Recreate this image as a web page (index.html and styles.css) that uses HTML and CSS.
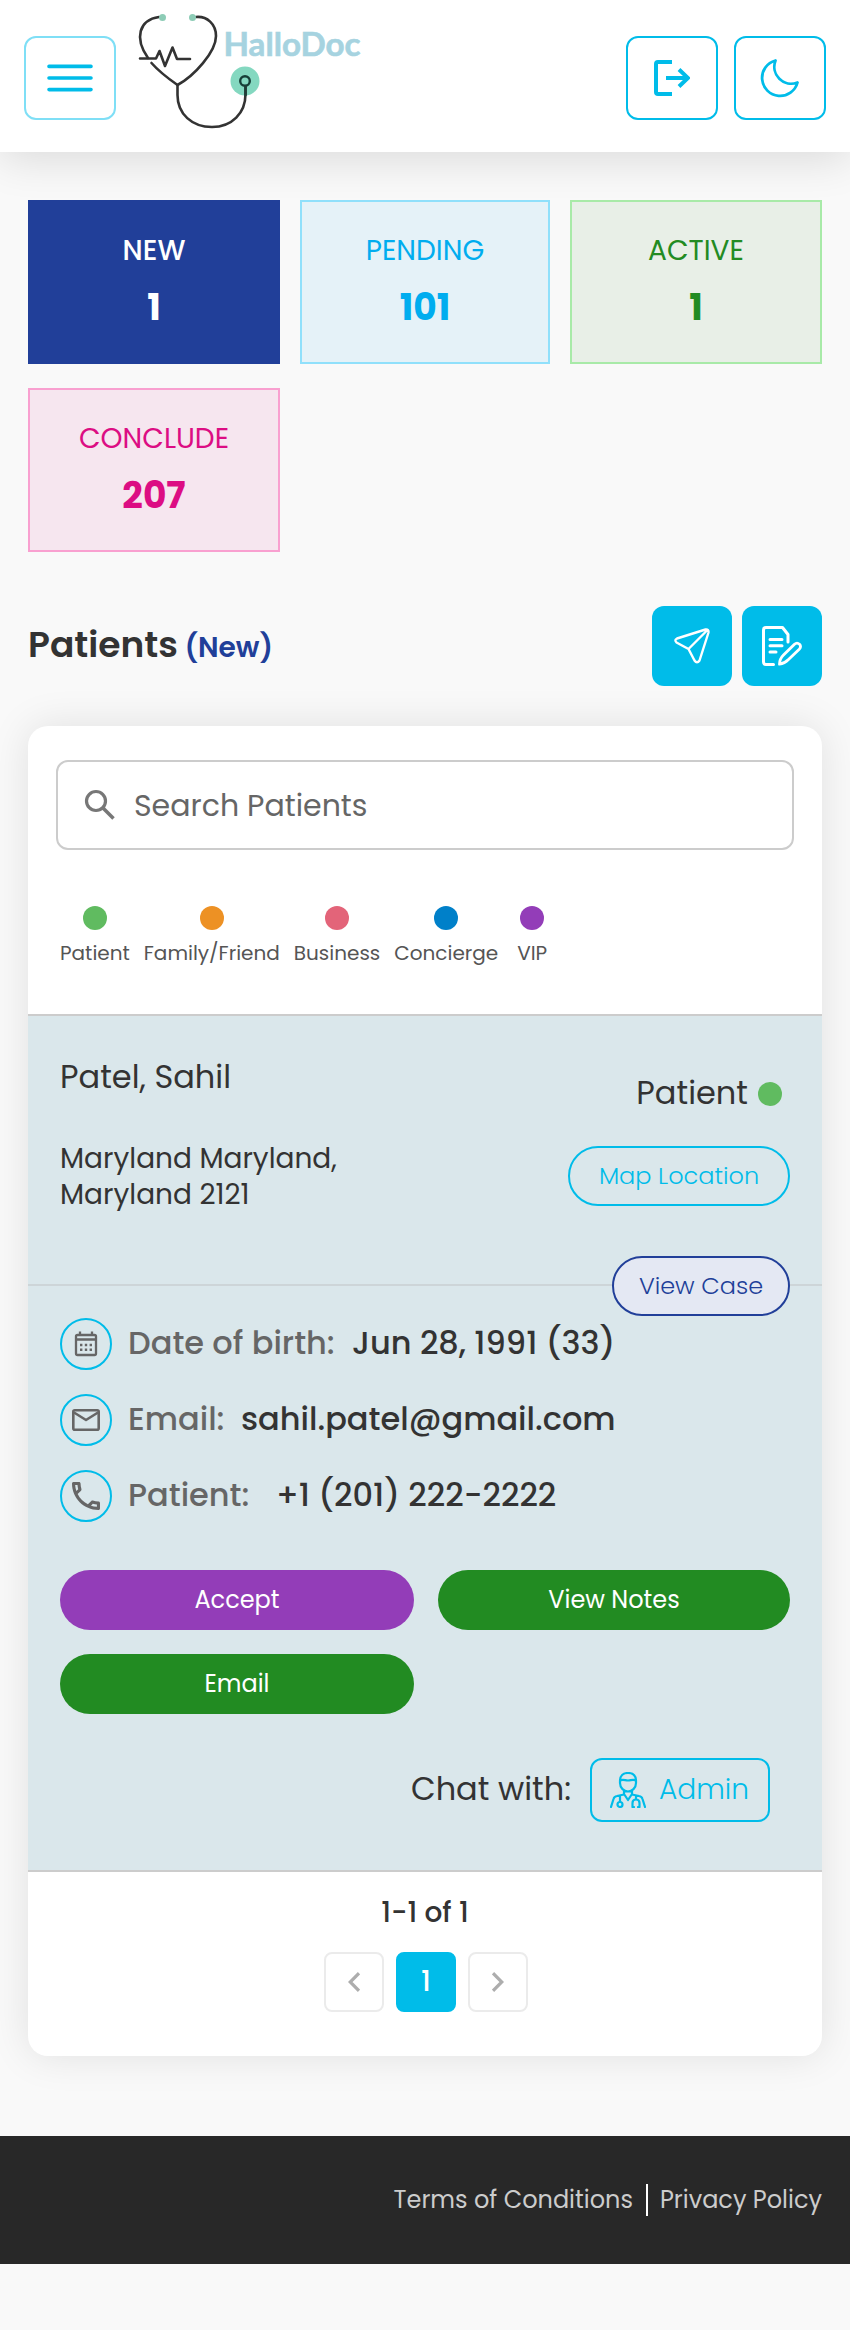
FILE: index.html
```html
<!DOCTYPE html>
<html lang="en">
<head>
<meta charset="utf-8">
<title>HalloDoc</title>
<link rel="stylesheet" href="styles.css">
</head>
<body>
<header class="topbar">
  <div class="topbar-side">
    <button class="icon-btn icon-btn-soft" aria-label="Menu">
      <svg width="46" height="28" viewBox="0 0 46 28" stroke="currentColor" stroke-width="3.6" stroke-linecap="round"><path d="M2 2.4h42M2 14h42M2 25.600h42"/></svg>
    </button>
    <svg class="logo" width="230" height="120" viewBox="0 0 230 120" fill="none">
      <circle cx="111" cy="69" r="14.500" fill="#84d8c0"/>
      <g stroke="#333" stroke-width="2.600" stroke-linecap="round" stroke-linejoin="round">
        <path d="M25 5C5 8 0 26 14 46"/>
        <path d="M17.500 51C24.500 59 33.500 66 43.500 73C60 64 82 40 82 24C82 12 73 4 62 5"/>
        <path d="M43.500 73V83C43.500 102 58 115 78 115C98 115 111.500 101 111.500 82V75"/>
        <path d="M6 46.500H22L25.500 39L31 54L38.500 35.500L43 47H56"/>
        <circle cx="111" cy="69" r="4.800" stroke="#173f38" stroke-width="2.400"/>
        <path d="M111.500 74.500V83" stroke="#1f3d37"/>
      </g>
      <circle cx="28.500" cy="5.500" r="3.500" fill="#8dccb6"/>
      <circle cx="58.500" cy="5.500" r="3.500" fill="#8dccb6"/>
      <text class="logo-text" x="89.500" y="44" textLength="137" lengthAdjust="spacingAndGlyphs">HalloDoc</text>
    </svg>
  </div>
  <div class="topbar-side topbar-actions">
    <button class="icon-btn" aria-label="Log out">
      <svg width="36" height="36" viewBox="0 0 36 36" fill="none" stroke="currentColor" stroke-width="4"><path d="M18 2H4Q2 2 2 4V32Q2 34 4 34H18M12 18H34M25 9.500L34 18L25 26.500"/></svg>
    </button>
    <button class="icon-btn" aria-label="Dark mode">
      <svg width="40" height="40" viewBox="0 0 40 40" fill="none" stroke="currentColor" stroke-width="2.800" stroke-linejoin="round"><path d="M15.500 2.500A18 18 0 1 0 37.500 24.500A17 17 0 0 1 15.500 2.500Z"/></svg>
    </button>
  </div>
</header>

<main class="content">
  <section class="stats">
    <div class="stat stat-new"><span class="stat-name">NEW</span><b class="stat-count">1</b></div>
    <div class="stat stat-pending"><span class="stat-name">PENDING</span><b class="stat-count">101</b></div>
    <div class="stat stat-active"><span class="stat-name">ACTIVE</span><b class="stat-count">1</b></div>
    <div class="stat stat-conclude"><span class="stat-name">CONCLUDE</span><b class="stat-count">207</b></div>
  </section>

  <div class="heading-row">
    <h1 class="heading">Patients <span class="heading-state">(New)</span></h1>
    <div class="heading-actions">
      <button class="solid-btn" aria-label="Send link">
        <svg width="40" height="40" viewBox="0 0 40 40" fill="none" stroke="currentColor" stroke-width="2.400" stroke-linejoin="round"><path d="M33.500 3.500L5 12.500Q2 14 4.500 16.500L16.500 23L22.500 34.500Q25 38 27.500 34.500L36.500 6.500Q37 3 33.500 3.500ZM16.500 23L35 4.500"/></svg>
      </button>
      <button class="solid-btn" aria-label="Create request">
        <svg width="40" height="40" viewBox="0 0 40 40" fill="none" stroke="currentColor" stroke-width="3" stroke-linecap="round" stroke-linejoin="round"><path d="M26 16V8.500L20.500 1.500H4Q1.500 1.500 1.500 4V36Q1.500 38.500 4 38.500H11.500M8 13.500H20M8 19.700H20M8 26H14"/><path stroke-width="2.800" d="M17.500 38.200Q17.500 33 21.500 29L32.500 18.200Q35 16 37.500 18.200Q39.500 20.500 37.500 23L26.500 33.500Q22.500 37.500 17.500 38.200Z"/></svg>
      </button>
    </div>
  </div>

  <section class="panel">
    <div class="filters">
      <label class="search">
        <svg width="32" height="32" viewBox="0 0 32 32" fill="none" stroke="#777" stroke-width="3.200"><circle cx="12" cy="12" r="9.500"/><path d="M18.500 18.500L29.500 29.500" stroke-width="3.600"/></svg>
        <span class="search-hint">Search Patients</span>
      </label>
      <ul class="legend">
        <li class="legend-item"><i class="dot dot-patient"></i><span>Patient</span></li>
        <li class="legend-item"><i class="dot dot-family"></i><span>Family/Friend</span></li>
        <li class="legend-item"><i class="dot dot-business"></i><span>Business</span></li>
        <li class="legend-item"><i class="dot dot-concierge"></i><span>Concierge</span></li>
        <li class="legend-item"><i class="dot dot-vip"></i><span>VIP</span></li>
      </ul>
    </div>

    <article class="request">
      <div class="summary">
        <div class="person">
          <div class="person-name">Patel, Sahil</div>
          <div class="person-address">Maryland Maryland,<br>Maryland 2121</div>
        </div>
        <div class="summary-side">
          <div class="kind">Patient <i class="dot dot-patient"></i></div>
          <button class="pill pill-map">Map Location</button>
        </div>
        <button class="pill pill-case">View Case</button>
      </div>
      <div class="details">
        <div class="detail">
          <span class="detail-icon"><svg width="24" height="26" viewBox="0 0 24 26" fill="none" stroke="currentColor" stroke-width="2.300"><rect x="2" y="4" width="20" height="20" rx="1.500"/><path d="M6 0.500V4M18 0.500V4M2 8.500H22" /><path d="M6 14h2.400M10.800 14h2.400M15.600 14h2.400M6 18.800h2.400M10.800 18.800h2.400M15.600 18.800h2.400" stroke-width="2.400"/></svg></span>
          <span class="detail-label lb-birth">Date of birth:</span><span class="detail-value">Jun 28, 1991 (33)</span>
        </div>
        <div class="detail">
          <span class="detail-icon"><svg width="28" height="22" viewBox="0 0 28 22" fill="none" stroke="currentColor" stroke-width="2.600" stroke-linejoin="round"><rect x="1.300" y="1.300" width="25.400" height="19.400" rx="1.500"/><path d="M2 3.500L14 11L26 3.500"/></svg></span>
          <span class="detail-label lb-email">Email:</span><span class="detail-value">sahil.patel@gmail.com</span>
        </div>
        <div class="detail">
          <span class="detail-icon"><svg width="28" height="28" viewBox="3 3 18 18" fill="currentColor"><path d="M6.540 5c.06.890.21 1.760.45 2.590l-1.200 1.200c-.410-1.200-.670-2.470-.760-3.790h1.510m9.860 12.020c.850.240 1.720.390 2.600.450v1.490c-1.320-.090-2.590-.350-3.800-.750l1.200-1.190M7.500 3H4c-.550 0-1 .450-1 1 0 9.390 7.610 17 17 17 .550 0 1-.450 1-1v-3.490c0-.550-.450-1-1-1-1.240 0-2.450-.200-3.570-.570-.100-.040-.210-.050-.310-.050-.260 0-.510.100-.710.290l-2.200 2.200c-2.830-1.450-5.150-3.760-6.590-6.590l2.200-2.200c.280-.280.360-.670.250-1.020C8.700 6.450 8.500 5.250 8.500 4c0-.550-.450-1-1-1z"/></svg></span>
          <span class="detail-label lb-phone">Patient:</span><span class="detail-value">+1 (201) 222-2222</span>
        </div>
        <div class="actions">
          <button class="action action-accept">Accept</button>
          <button class="action">View Notes</button>
          <button class="action">Email</button>
        </div>
        <div class="chat">
          <span class="chat-label">Chat with:</span>
          <button class="chat-btn">
            <svg width="36" height="36" viewBox="0 0 36 36" fill="none" stroke="currentColor" stroke-width="2.200" stroke-linecap="round" stroke-linejoin="round"><path d="M10 9C10 3.500 13 1 18 1S26 3.500 26 9V11C26 16 22 19.500 18 19.500S10 16 10 11ZM10 8.500C13 7 15 8.500 18 8.500S23 7 26 8.500M14 19V22L18 28L22 22V19M1 35L3.500 27Q4.200 24.500 7 24L14 22.500M22 22.500L29 24Q31.800 24.500 32.500 27L35 35M10 24V29.500M26 23.500V27M24 35H22.500V31Q22.500 27.500 26 27.500T29.500 31V35H28"/><circle cx="10" cy="32.500" r="2.500"/></svg>
            <span>Admin</span>
          </button>
        </div>
      </div>
    </article>

    <div class="pager">
      <div class="pager-range">1-1 of 1</div>
      <div class="pager-pages">
        <button class="page" aria-label="Previous"><svg width="12" height="20" viewBox="0 0 12 20" fill="none" stroke="currentColor" stroke-width="3.200"><path d="M11 1.200L2.200 10L11 18.800"/></svg></button>
        <button class="page page-current">1</button>
        <button class="page" aria-label="Next"><svg width="12" height="20" viewBox="0 0 12 20" fill="none" stroke="currentColor" stroke-width="3.200"><path d="M1 1.200L9.800 10L1 18.800"/></svg></button>
      </div>
    </div>
  </section>
</main>

<footer class="footer">
  <a>Terms of Conditions</a>
  <span class="footer-sep"></span>
  <a>Privacy Policy</a>
</footer>
</body>
</html>
```
FILE: styles.css
```css
* { box-sizing: border-box; }
body { margin: 0; background: #f9f9f9; color: #333; font-family: Poppins, Inter, "Open Sans", sans-serif; }
button { margin: 0; padding: 0; background: none; border: 0; font: inherit; color: inherit; }
svg { display: block; flex: none; }
span, a, div { white-space: nowrap; }

.topbar { display: flex; justify-content: space-between; align-items: flex-start; height: 152px; padding: 0 24px; background: #fff; box-shadow: 0 8px 40px rgba(0, 0, 0, .12); }
.topbar-side { display: flex; gap: 18px; }
.topbar-actions { gap: 16px; }
.icon-btn { display: flex; align-items: center; justify-content: center; width: 92px; height: 84px; margin-top: 36px; border: 2px solid #00bce9; border-radius: 12px; color: #00bce9; }
.icon-btn-soft { border-color: #7fdff6; }
.logo { margin-top: 12px; }
.logo-text { font: 700 32px Lato, sans-serif; fill: #a6d3e0; stroke: #a6d3e0; stroke-width: .6px; }

.content { padding: 48px 28px 80px; }
.stats { display: grid; grid-template-columns: 252px 250px 252px; gap: 24px 20px; }
.stat { display: flex; flex-direction: column; align-items: center; gap: 12px; height: 164px; padding-top: 29px; border: 2px solid; }
.stat-name { font-size: 28px; line-height: 40px; }
.stat-count { font-size: 36px; line-height: 50px; font-weight: 700; }
.stat-new { background: #213f99; border-color: #213f99; color: #fff; }
.stat-new .stat-name { font-weight: 500; }
.stat-pending { background: #e5f2f8; border-color: #90e0fb; color: #00adef; }
.stat-active { background: #e8efe7; border-color: #a8eaa8; color: #228b22; }
.stat-conclude { background: #f6e6ef; border-color: #f9a0d0; color: #dc0d83; }

.heading-row { display: flex; justify-content: space-between; align-items: center; margin: 54px 0 40px; }
.heading { margin: 0; padding-top: 1px; font-size: 36px; line-height: 54px; font-weight: 600; }
.heading-state { margin-left: -2px; font-size: 28px; color: #213f99; }
.heading-actions { display: flex; gap: 10px; }
.solid-btn { display: flex; align-items: center; justify-content: center; width: 80px; height: 80px; border-radius: 12px; background: #00bce9; color: #fff; }

.panel { background: #fff; border-radius: 20px; box-shadow: 0 0 40px rgba(0, 0, 0, .1); }
.filters { padding: 34px 28px 46px; }
.search { display: flex; align-items: center; gap: 18px; height: 90px; padding-left: 26px; border: 2px solid #ccc; border-radius: 12px; font-size: 30px; color: #666; }
.search-hint { padding-top: 2px; }
.legend { display: flex; gap: 14px; margin: 56px 0 0 4px; padding: 0; list-style: none; }
.legend-item { display: flex; flex-direction: column; align-items: center; gap: 8px; min-width: 40px; font-size: 20px; line-height: 30px; color: #555; }
.dot { width: 24px; height: 24px; border-radius: 50%; }
.dot-patient { background: #60bb60; }
.dot-family { background: #ed9124; }
.dot-business { background: #e36479; }
.dot-concierge { background: #0080c9; }
.dot-vip { background: #933db8; }

.request { border: solid #ccc; border-width: 2px 0; background: #dae7eb; }
.summary { position: relative; display: flex; justify-content: space-between; height: 270px; padding: 38px 32px 0; border-bottom: 2px solid #cdd5d8; }
.person { display: flex; flex-direction: column; gap: 41px; }
.person-name { font-size: 32px; line-height: 46px; }
.person-address { font-size: 28px; line-height: 36px; }
.summary-side { display: flex; flex-direction: column; align-items: flex-end; gap: 30px; padding-top: 16px; }
.kind { display: flex; align-items: center; gap: 10px; padding-right: 8px; font-size: 32px; line-height: 46px; }
.kind .dot { margin-top: 2px; }
.pill { height: 60px; padding-bottom: 1px; border: 2px solid; border-radius: 30px; font-size: 24px; font-weight: 300; }
.pill-map { width: 222px; color: #00bce9; }
.pill-case { position: absolute; right: 32px; bottom: -32px; width: 178px; background: #e4e8f3; color: #213f99; }

.details { padding: 32px 32px 48px; }
.detail { display: flex; align-items: center; height: 52px; margin-bottom: 24px; font-size: 32px; line-height: 48px; font-weight: 500; }
.detail-icon { display: flex; align-items: center; justify-content: center; width: 52px; height: 52px; margin-right: 16px; border: 2px solid #00bce9; border-radius: 50%; color: #666; }
.detail-label { color: #666; padding-bottom: 3px; }
.detail-value { padding-bottom: 3px; }
.lb-birth { width: 224px; }
.lb-email { width: 113px; }
.lb-phone { width: 148px; }
.actions { display: grid; grid-template-columns: 354px 352px; gap: 24px; margin-top: 48px; }
.action { height: 60px; padding-bottom: 1px; border-radius: 30px; background: #228b22; color: #fff; font-size: 24px; }
.action-accept { background: #933db8; }
.chat { display: flex; align-items: center; justify-content: flex-end; gap: 19px; margin: 44px 20px 0 0; }
.chat-label { padding-bottom: 2px; font-size: 32px; line-height: 48px; }
.chat-btn { display: flex; align-items: center; gap: 13px; width: 180px; height: 64px; padding-left: 18px; border: 2px solid #00bce9; border-radius: 12px; color: #00bce9; font-size: 28px; font-weight: 300; }

.pager { display: flex; flex-direction: column; align-items: center; gap: 19px; padding: 21px 0 44px; }
.pager-range { font-size: 28px; line-height: 40px; font-weight: 500; }
.pager-pages { display: flex; gap: 12px; margin-left: 2px; }
.page { display: flex; align-items: center; justify-content: center; width: 60px; height: 60px; border: 2px solid #ebebeb; border-radius: 8px; color: #adadad; font-size: 28px; font-weight: 500; }
.page-current { background: #00bce9; border-color: #00bce9; color: #fff; }

.footer { display: flex; align-items: center; justify-content: flex-end; height: 128px; padding: 0 28px 1px 0; background: #282828; color: #ccc; font-size: 24px; }
.footer-sep { width: 2px; height: 32px; margin: 1px 12px 0 13px; background: #fff; }
```
